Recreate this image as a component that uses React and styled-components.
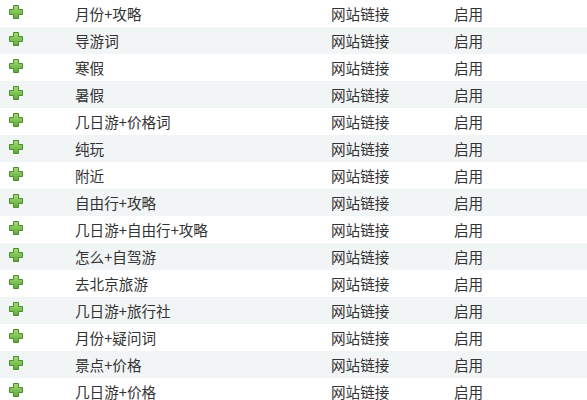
import React from "react";
import styled, { createGlobalStyle } from "styled-components";

const GlobalStyle = createGlobalStyle`
  body {
    margin: 0;
    background: #fff;
    font-family: "Noto Sans CJK SC", "Noto Sans", sans-serif;
  }
`;

const List = styled.div`
  width: 587px;
`;

const Row = styled.div`
  display: grid;
  grid-template-columns: 75px 256px 123px 1fr;
  align-items: center;
  height: 27px;
  background: ${(p) => (p.$alt ? "#f2f5f6" : "#fff")};
  font-size: 14.6px;
  color: #333;
`;

const IconCell = styled.div`
  display: flex;
  align-items: center;
  padding-left: 9px;
  margin-top: -3px;
`;

const Cell = styled.div`
  white-space: nowrap;
  line-height: 27px;
`;

const rows = [
  "月份+攻略",
  "导游词",
  "寒假",
  "暑假",
  "几日游+价格词",
  "纯玩",
  "附近",
  "自由行+攻略",
  "几日游+自由行+攻略",
  "怎么+自驾游",
  "去北京旅游",
  "几日游+旅行社",
  "月份+疑问词",
  "景点+价格",
  "几日游+价格",
];

function PlusIcon() {
  return (
    <svg width="14" height="14" viewBox="0 0 14 14">
      <defs>
        <linearGradient id="pg" x1="0" y1="0" x2="0" y2="1">
          <stop offset="0" stopColor="#a6dc74" />
          <stop offset="1" stopColor="#5ea83a" />
        </linearGradient>
      </defs>
      <path
        d="M4.5 0.5 H9.5 V4.5 H13.5 V9.5 H9.5 V13.5 H4.5 V9.5 H0.5 V4.5 H4.5 Z"
        fill="url(#pg)"
        stroke="#4c8f2e"
        strokeWidth="1"
      />
    </svg>
  );
}

function App() {
  return (
    <List>
      <GlobalStyle />
      {rows.map((name, i) => (
        <Row key={i} $alt={i % 2 === 1}>
          <IconCell>
            <PlusIcon />
          </IconCell>
          <Cell>{name}</Cell>
          <Cell>网站链接</Cell>
          <Cell>启用</Cell>
        </Row>
      ))}
    </List>
  );
}

export default App;
